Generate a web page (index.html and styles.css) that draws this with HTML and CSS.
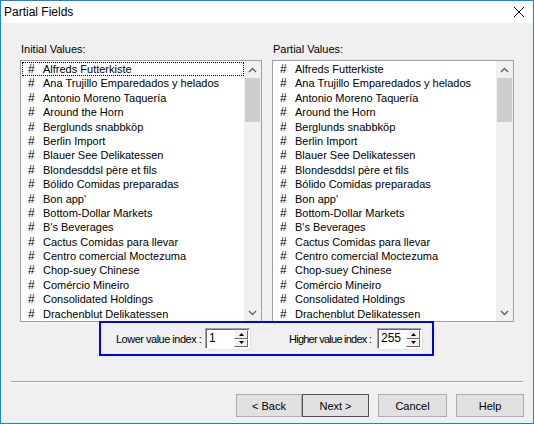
FILE: index.html
```html
<!DOCTYPE html>
<html>
<head>
<meta charset="utf-8">
<link rel="stylesheet" href="styles.css">
</head>
<body>
<div class="window">
  <div class="titlebar">
    <span class="title">Partial Fields</span>
    <svg class="close" width="12" height="12" viewBox="0 0 12 12"><path d="M1 1L11 11M11 1L1 11" stroke="#000" stroke-width="1"/></svg>
  </div>
  <div class="content">
    <div class="lists">
      <div class="col">
        <div class="label">Initial Values:</div>
        <div class="listbox">
          <div class="items">
            <div class="item focus"><span class="hash">#</span>Alfreds Futterkiste</div>
            <div class="item"><span class="hash">#</span>Ana Trujillo Emparedados y helados</div>
            <div class="item"><span class="hash">#</span>Antonio Moreno Taquería</div>
            <div class="item"><span class="hash">#</span>Around the Horn</div>
            <div class="item"><span class="hash">#</span>Berglunds snabbköp</div>
            <div class="item"><span class="hash">#</span>Berlin Import</div>
            <div class="item"><span class="hash">#</span>Blauer See Delikatessen</div>
            <div class="item"><span class="hash">#</span>Blondesddsl père et fils</div>
            <div class="item"><span class="hash">#</span>Bólido Comidas preparadas</div>
            <div class="item"><span class="hash">#</span>Bon app'</div>
            <div class="item"><span class="hash">#</span>Bottom-Dollar Markets</div>
            <div class="item"><span class="hash">#</span>B's Beverages</div>
            <div class="item"><span class="hash">#</span>Cactus Comidas para llevar</div>
            <div class="item"><span class="hash">#</span>Centro comercial Moctezuma</div>
            <div class="item"><span class="hash">#</span>Chop-suey Chinese</div>
            <div class="item"><span class="hash">#</span>Comércio Mineiro</div>
            <div class="item"><span class="hash">#</span>Consolidated Holdings</div>
            <div class="item"><span class="hash">#</span>Drachenblut Delikatessen</div>
          </div>
          <div class="scrollbar">
            <div class="arrow"><svg width="9" height="6" viewBox="0 0 9 6"><path d="M1 5L4.5 1.5L8 5" fill="none" stroke="#606060" stroke-width="1.4"/></svg></div>
            <div class="track"><div class="thumb"></div></div>
            <div class="arrow"><svg width="9" height="6" viewBox="0 0 9 6"><path d="M1 1L4.5 4.5L8 1" fill="none" stroke="#606060" stroke-width="1.4"/></svg></div>
          </div>
        </div>
      </div>
      <div class="col">
        <div class="label">Partial Values:</div>
        <div class="listbox">
          <div class="items">
            <div class="item"><span class="hash">#</span>Alfreds Futterkiste</div>
            <div class="item"><span class="hash">#</span>Ana Trujillo Emparedados y helados</div>
            <div class="item"><span class="hash">#</span>Antonio Moreno Taquería</div>
            <div class="item"><span class="hash">#</span>Around the Horn</div>
            <div class="item"><span class="hash">#</span>Berglunds snabbköp</div>
            <div class="item"><span class="hash">#</span>Berlin Import</div>
            <div class="item"><span class="hash">#</span>Blauer See Delikatessen</div>
            <div class="item"><span class="hash">#</span>Blondesddsl père et fils</div>
            <div class="item"><span class="hash">#</span>Bólido Comidas preparadas</div>
            <div class="item"><span class="hash">#</span>Bon app'</div>
            <div class="item"><span class="hash">#</span>Bottom-Dollar Markets</div>
            <div class="item"><span class="hash">#</span>B's Beverages</div>
            <div class="item"><span class="hash">#</span>Cactus Comidas para llevar</div>
            <div class="item"><span class="hash">#</span>Centro comercial Moctezuma</div>
            <div class="item"><span class="hash">#</span>Chop-suey Chinese</div>
            <div class="item"><span class="hash">#</span>Comércio Mineiro</div>
            <div class="item"><span class="hash">#</span>Consolidated Holdings</div>
            <div class="item"><span class="hash">#</span>Drachenblut Delikatessen</div>
          </div>
          <div class="scrollbar">
            <div class="arrow"><svg width="9" height="6" viewBox="0 0 9 6"><path d="M1 5L4.5 1.5L8 5" fill="none" stroke="#606060" stroke-width="1.4"/></svg></div>
            <div class="track"><div class="thumb"></div></div>
            <div class="arrow"><svg width="9" height="6" viewBox="0 0 9 6"><path d="M1 1L4.5 4.5L8 1" fill="none" stroke="#606060" stroke-width="1.4"/></svg></div>
          </div>
        </div>
      </div>
    </div>
    <div class="range">
      <div class="field lower">
        <span class="flabel">Lower value index :</span>
        <div class="spin"><span class="val">1</span>
          <div class="spinbtns">
            <div class="sbtn"><svg width="5" height="3" viewBox="0 0 5 3"><path d="M0 3L2.5 0L5 3Z" fill="#000"/></svg></div>
            <div class="sbtn"><svg width="5" height="3" viewBox="0 0 5 3"><path d="M0 0L2.5 3L5 0Z" fill="#000"/></svg></div>
          </div>
        </div>
      </div>
      <div class="field higher">
        <span class="flabel">Higher value index :</span>
        <div class="spin"><span class="val">255</span>
          <div class="spinbtns">
            <div class="sbtn"><svg width="5" height="3" viewBox="0 0 5 3"><path d="M0 3L2.5 0L5 3Z" fill="#000"/></svg></div>
            <div class="sbtn"><svg width="5" height="3" viewBox="0 0 5 3"><path d="M0 0L2.5 3L5 0Z" fill="#000"/></svg></div>
          </div>
        </div>
      </div>
    </div>
    <div class="separator"></div>
    <div class="buttons">
      <div class="pair">
        <button class="btn back">&lt; Back</button>
        <button class="btn default">Next &gt;</button>
      </div>
      <button class="btn cancel">Cancel</button>
      <button class="btn help">Help</button>
    </div>
  </div>
</div>
</body>
</html>
```
FILE: styles.css
```css
* { box-sizing: border-box; }
body { margin: 0; font-family: "Liberation Sans", Arial, sans-serif; font-size: 11px; color: #000; }
.window { width: 534px; height: 424px; border: 1px solid #1883d7; background: #f0f0f0; display: flex; flex-direction: column; }
.titlebar { height: 22px; background: #fff; display: flex; align-items: center; justify-content: space-between; padding: 0 8px 0 3px; }
.title { font-size: 12px; }
.close { display: block; }
.content { flex: 1; display: flex; flex-direction: column; padding-top: 20px; }
.lists { display: flex; gap: 10px; padding-left: 19px; }
.col { display: flex; flex-direction: column; width: 242px; }
.label { height: 17px; line-height: 13px; padding-left: 1px; white-space: nowrap; }
.listbox { height: 262px; border: 1px solid #a0a0a0; background: #fff; display: flex; overflow: hidden; }
.items { flex: 1; padding-top: 1px; }
.item { height: 14.4px; line-height: 14.4px; white-space: nowrap; padding-left: 6px; margin-left: 1px; }
.item.focus { outline: 1px dotted #000; outline-offset: -1px; }
.hash { display: inline-block; width: 15px; font-size: 12px; }
.scrollbar { width: 17px; background: #f0f0f0; display: flex; flex-direction: column; }
.arrow { height: 17px; display: flex; align-items: center; justify-content: center; }
.track { flex: 1; padding: 0 1px; }
.thumb { height: 44px; background: #cdcdcd; }
.range { margin: -1px 0 0 98px; width: 335px; height: 35px; border: 2px solid #0000f0; display: flex; align-items: center; padding-left: 15px; }
.field { display: flex; align-items: center; }
.flabel { white-space: nowrap; letter-spacing: -0.5px; }
.lower .flabel { width: 89px; }
.higher { margin-left: 39px; }
.higher .flabel { width: 88px; letter-spacing: -0.75px; }
.spin { width: 45px; height: 21px; background: #fff; border: 1px solid; border-color: #a0a0a0 #fff #fff #a0a0a0; box-shadow: inset 1px 1px 0 #696969, 1px 1px 0 #e3e3e3; display: flex; justify-content: space-between; padding: 1px 1px 1px 3px; }
.val { font-size: 12px; line-height: 16px; }
.spinbtns { width: 14px; display: flex; flex-direction: column; }
.sbtn { flex: 1; background: #f0f0f0; border: 1px solid; border-color: #fff #696969 #696969 #fff; display: flex; align-items: center; justify-content: center; }
.sbtn svg { display: block; }
.separator { margin: 25px 0 0 10px; width: 512px; height: 2px; border-top: 1px solid #a0a0a0; border-bottom: 1px solid #fff; }
.buttons { display: flex; justify-content: flex-end; gap: 9px; margin-top: 11px; padding-right: 9px; }
.pair { display: flex; }
.btn { height: 23px; background: #e1e1e1; border: 1px solid #adadad; font-family: "Liberation Sans", Arial, sans-serif; font-size: 11px; color: #000; padding: 0; margin: 0; }
.btn.back { width: 66px; }
.btn.default { width: 67px; border-color: #505050; }
.btn.cancel { width: 69px; }
.btn.help { width: 68px; }
```
